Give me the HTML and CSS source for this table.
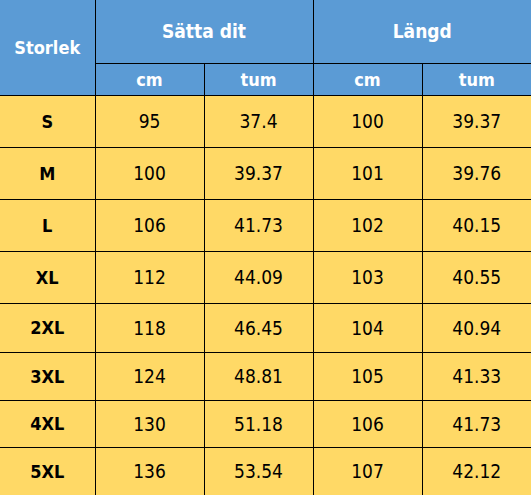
FILE: index.html
```html
<!DOCTYPE html>
<html lang="sv">
<head>
<meta charset="utf-8">
<title>Storlekstabell</title>
<link rel="stylesheet" href="styles.css">
</head>
<body>
<table class="size-table">
  <colgroup>
    <col class="c-size">
    <col class="c-val">
    <col class="c-val">
    <col class="c-val">
    <col class="c-val">
  </colgroup>
  <thead>
    <tr class="h1">
      <th rowspan="2" class="first">Storlek</th>
      <th colspan="2">Sätta dit</th>
      <th colspan="2">Längd</th>
    </tr>
    <tr class="h2">
      <th>cm</th><th>tum</th><th>cm</th><th>tum</th>
    </tr>
  </thead>
  <tbody>
    <tr class="r52"><td class="sz">S</td><td>95</td><td>37.4</td><td>100</td><td>39.37</td></tr>
    <tr class="r52"><td class="sz">M</td><td>100</td><td>39.37</td><td>101</td><td>39.76</td></tr>
    <tr class="r52"><td class="sz">L</td><td>106</td><td>41.73</td><td>102</td><td>40.15</td></tr>
    <tr class="r52"><td class="sz">XL</td><td>112</td><td>44.09</td><td>103</td><td>40.55</td></tr>
    <tr class="r49"><td class="sz">2XL</td><td>118</td><td>46.45</td><td>104</td><td>40.94</td></tr>
    <tr class="r48"><td class="sz">3XL</td><td>124</td><td>48.81</td><td>105</td><td>41.33</td></tr>
    <tr class="r47"><td class="sz">4XL</td><td>130</td><td>51.18</td><td>106</td><td>41.73</td></tr>
    <tr class="r48"><td class="sz">5XL</td><td>136</td><td>53.54</td><td>107</td><td>42.12</td></tr>
  </tbody>
</table>
</body>
</html>
```

FILE: styles.css
```css
html, body {
  margin: 0;
  padding: 0;
  background: #ffd966;
}
.size-table {
  border-collapse: collapse;
  table-layout: fixed;
  width: 531px;
  font-family: "DejaVu Sans Condensed", "DejaVu Sans", sans-serif;
  font-size: 19px;
  color: #000;
}
.c-size { width: 95px; }
.c-val { width: 109px; }
.size-table th,
.size-table td {
  border: 1px solid #000;
  padding: 0;
  text-align: center;
  vertical-align: middle;
  box-sizing: border-box;
}
.size-table tr > :first-child { border-left: none; }
.size-table tr > :last-child { border-right: none; }
.size-table thead tr:first-child th { border-top: none; }
.size-table tbody tr:last-child td { border-bottom: none; }
.size-table th {
  background: #5b9bd5;
  color: #fff;
  font-weight: bold;
}
.size-table th.first { border-left: none; }
.h1 th { height: 63px; font-size: 19px; }
.h1 th.first { font-size: 18px; }
.h2 th { height: 32px; font-size: 18px; }
.size-table td { background: #ffd966; }
.size-table td.sz { font-weight: bold; font-size: 18px; }
.r52 td { height: 52px; }
.r49 td { height: 49px; }
.r48 td { height: 48px; }
.r47 td { height: 47px; }
```
